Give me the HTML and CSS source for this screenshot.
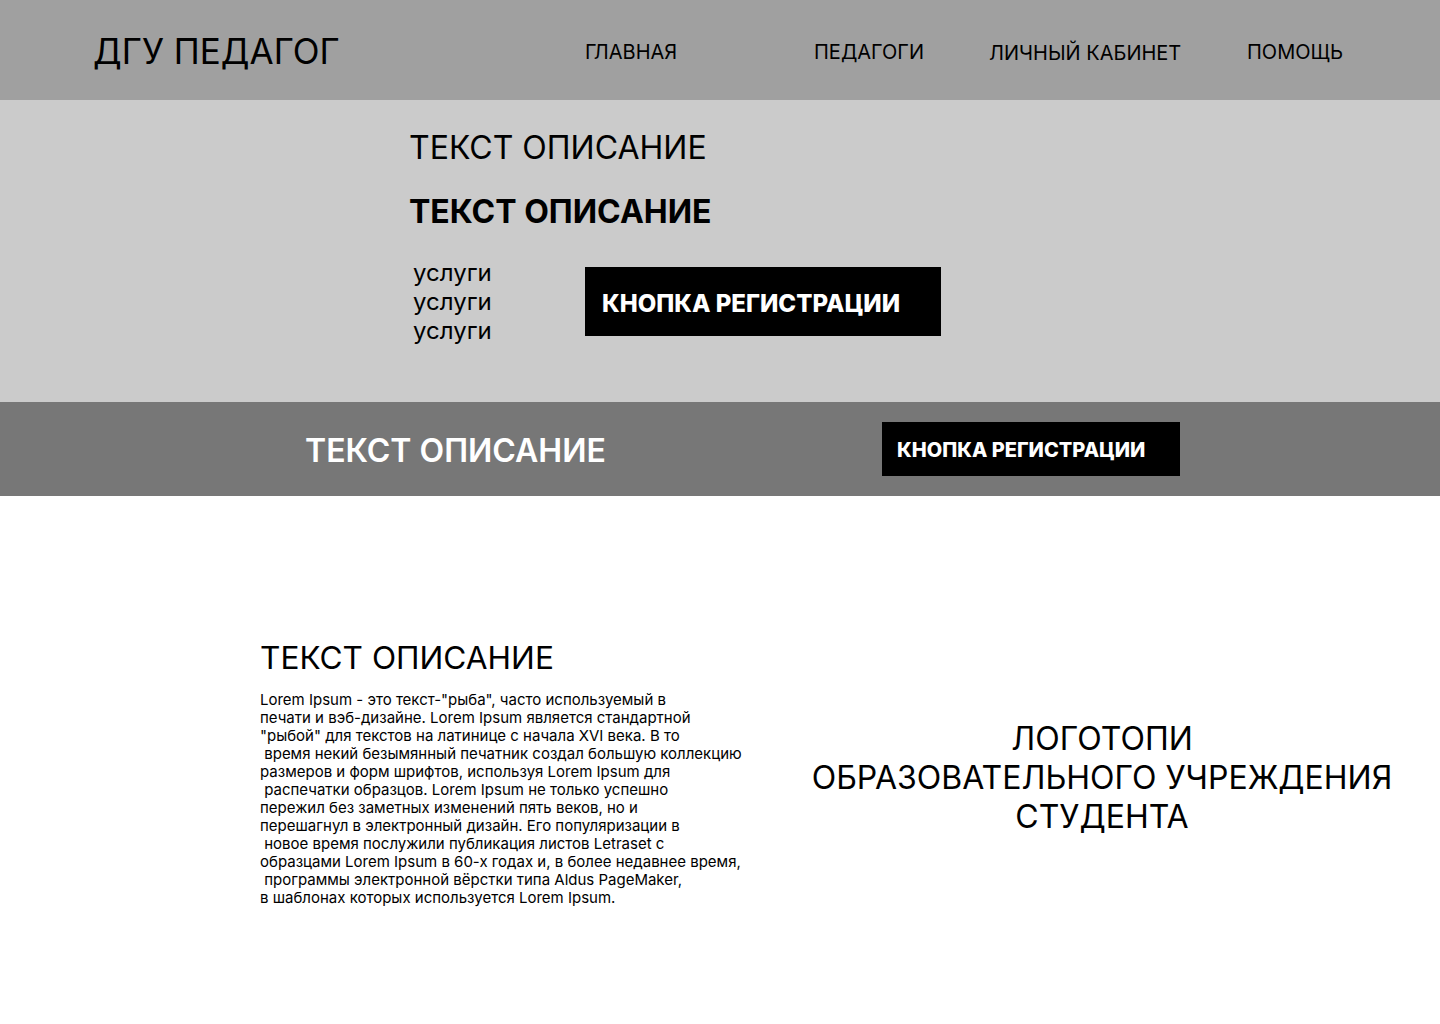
FILE: index.html
```html
<!DOCTYPE html>
<html lang="ru">
<head>
<meta charset="utf-8">
<title>ДГУ ПЕДАГОГ</title>
<link rel="stylesheet" href="styles.css">
</head>
<body>
<header class="header">
  <div class="logo">ДГУ ПЕДАГОГ</div>
  <nav class="nav">
    <a class="nav-item nav-main">ГЛАВНАЯ</a>
    <a class="nav-item nav-ped">ПЕДАГОГИ</a>
    <a class="nav-item nav-cab">ЛИЧНЫЙ КАБИНЕТ</a>
    <a class="nav-item nav-help">ПОМОЩЬ</a>
  </nav>
</header>
<section class="hero">
  <h1 class="hero-title">ТЕКСТ ОПИСАНИЕ</h1>
  <h2 class="hero-subtitle">ТЕКСТ ОПИСАНИЕ</h2>
  <div class="hero-row">
    <ul class="services">
      <li>услуги</li>
      <li>услуги</li>
      <li>услуги</li>
    </ul>
    <button class="btn btn-large">КНОПКА РЕГИСТРАЦИИ</button>
  </div>
</section>
<section class="band">
  <div class="band-title">ТЕКСТ ОПИСАНИЕ</div>
  <button class="btn btn-small">КНОПКА РЕГИСТРАЦИИ</button>
</section>
<section class="about">
  <div class="about-text">
    <h3 class="about-title">ТЕКСТ ОПИСАНИЕ</h3>
    <p class="about-body">Lorem Ipsum - это текст-"рыба", часто используемый в
печати и вэб-дизайне. Lorem Ipsum является стандартной
"рыбой" для текстов на латинице с начала XVI века. В то
 время некий безымянный печатник создал большую коллекцию
размеров и форм шрифтов, используя Lorem Ipsum для
 распечатки образцов. Lorem Ipsum не только успешно
пережил без заметных изменений пять веков, но и
перешагнул в электронный дизайн. Его популяризации в
 новое время послужили публикация листов Letraset с
образцами Lorem Ipsum в 60-х годах и, в более недавнее время,
 программы электронной вёрстки типа Aldus PageMaker,
в шаблонах которых используется Lorem Ipsum.</p>
  </div>
  <div class="about-logo">ЛОГОТОПИ<br>ОБРАЗОВАТЕЛЬНОГО УЧРЕЖДЕНИЯ<br>СТУДЕНТА</div>
</section>
</body>
</html>
```
FILE: styles.css
```css
* { box-sizing: border-box; }
html, body { margin: 0; padding: 0; }
body {
  font-family: Inter, "Noto Sans", sans-serif;
  color: #000;
  background: #fff;
  width: 1440px;
}
.header {
  height: 100px;
  background: #a0a0a0;
  display: flex;
  align-items: center;
  padding-left: 93px;
}
.logo {
  font-size: 35px;
  line-height: 44px;
  font-weight: 400;
  width: 492px;
  margin-top: 2px;
}
.nav {
  display: flex;
  align-items: center;
  margin-top: 3px;
}
.nav-item {
  font-size: 20px;
  line-height: 24px;
  color: #000;
  text-decoration: none;
}
.nav-main { width: 229px; }
.nav-ped { width: 175px; }
.nav-cab { width: 258px; margin-top: 2px; }
.hero {
  height: 302px;
  background: #cbcbcb;
  padding: 28px 0 0 409px;
}
.hero-title {
  margin: 0;
  font-size: 32px;
  line-height: 40px;
  font-weight: 400;
}
.hero-subtitle {
  margin: 24px 0 0;
  font-size: 32px;
  line-height: 40px;
  font-weight: 700;
}
.hero-row {
  display: flex;
  align-items: flex-start;
  margin-top: 35px;
}
.services {
  list-style: none;
  margin: 0;
  padding: 0 0 0 4px;
  width: 176px;
  font-size: 24px;
  line-height: 29px;
  margin-top: -9px;
}
.btn {
  background: #000;
  color: #fff;
  border: 0;
  font-family: Inter, "Noto Sans", sans-serif;
  font-weight: 800;
  text-align: left;
  padding: 0;
  cursor: pointer;
}
.btn-large {
  width: 356px;
  height: 69px;
  font-size: 24px;
  padding-left: 17px;
  padding-top: 3px;
}
.band {
  height: 94px;
  background: #777777;
  display: flex;
  align-items: center;
  padding-left: 305px;
}
.band-title {
  color: #fff;
  font-size: 32px;
  font-weight: 600;
  width: 577px;
  margin-top: 2px;
}
.btn-small {
  width: 298px;
  height: 54px;
  font-size: 20px;
  padding-left: 15px;
  padding-top: 3px;
  margin-top: -1px;
}
.about {
  display: flex;
  align-items: flex-start;
  padding: 142px 0 0 260px;
  height: 528px;
}
.about-text {
  width: 542px;
}
.about-title {
  margin: 0;
  font-size: 31.6px;
  line-height: 40px;
  font-weight: 400;
}
.about-body {
  margin: 13px 0 0;
  font-size: 15px;
  line-height: 18px;
  white-space: pre;
}
.about-logo {
  width: 600px;
  text-align: center;
  font-size: 32px;
  line-height: 39px;
  margin-top: 81px;
}
```
